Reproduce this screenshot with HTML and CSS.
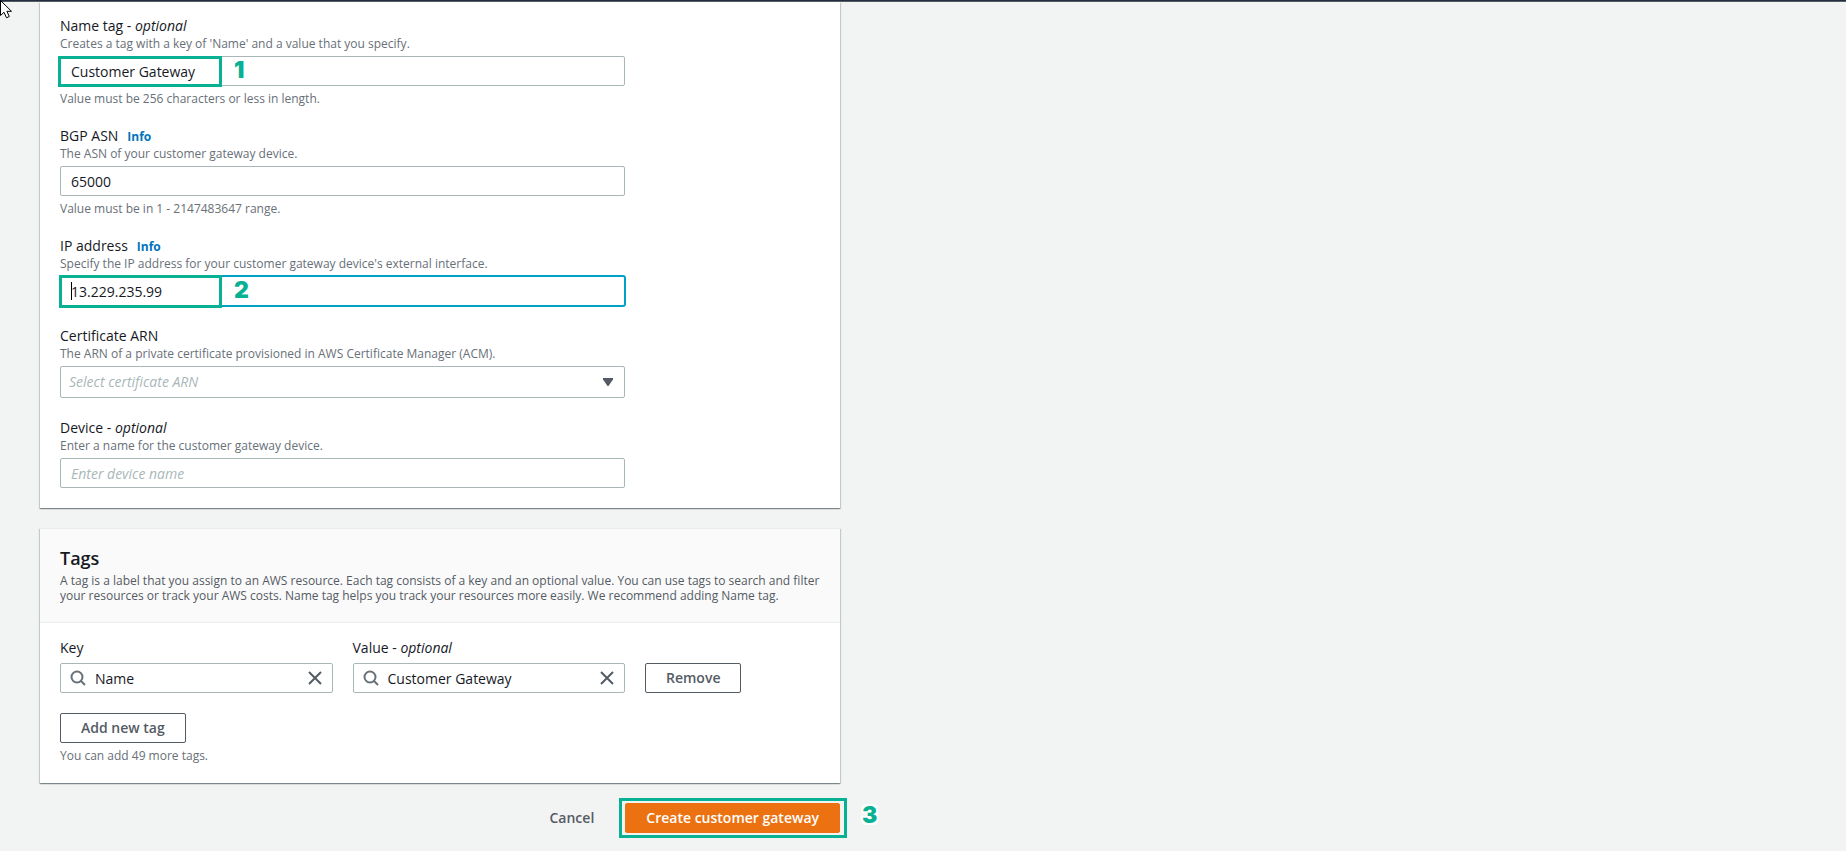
FILE: index.html
```html
<!DOCTYPE html>
<html lang="en">
<head>
  <meta charset="UTF-8">
  <meta name="viewport" content="width=device-width, initial-scale=1.0">
  <title>Create customer gateway</title>
  <link rel="stylesheet" href="styles.css">
</head>
<body>
  <div class="topbar"></div>
  <svg class="pointer" width="14" height="20" viewBox="0 0 14 20" aria-hidden="true">
    <path d="M0.500 0.500V15.500L4 12.300L6.500 17.800L9.300 16.500L6.900 11.300H11.500Z" fill="#fff" stroke="#000"/>
  </svg>

  <main class="page">
    <!-- Details -->
    <section class="card card-details">
      <div class="field">
        <label for="nameTag">Name tag - <i>optional</i></label>
        <p class="hint">Creates a tag with a key of 'Name' and a value that you specify.</p>
        <div class="control">
          <input type="text" id="nameTag" class="input" value="Customer Gateway">
          <span class="mark mark-name"></span>
          <span class="step step-field">1</span>
        </div>
        <p class="constraint">Value must be 256 characters or less in length.</p>
      </div>

      <div class="field">
        <div class="label-row">
          <label for="bgpAsn">BGP ASN</label>
          <a href="#" class="info">Info</a>
        </div>
        <p class="hint">The ASN of your customer gateway device.</p>
        <div class="control">
          <input type="text" id="bgpAsn" class="input" value="65000">
        </div>
        <p class="constraint">Value must be in 1 - 2147483647 range.</p>
      </div>

      <div class="field">
        <div class="label-row">
          <label for="ipAddress">IP address</label>
          <a href="#" class="info">Info</a>
        </div>
        <p class="hint">Specify the IP address for your customer gateway device's external interface.</p>
        <div class="control">
          <input type="text" id="ipAddress" class="input input-active" value="13.229.235.99">
          <span class="caret"></span>
          <span class="mark mark-ip"></span>
          <span class="step step-field">2</span>
        </div>
      </div>

      <div class="field">
        <label for="certArn">Certificate ARN</label>
        <p class="hint">The ARN of a private certificate provisioned in AWS Certificate Manager (ACM).</p>
        <div class="control">
          <select id="certArn" class="input select">
            <option>Select certificate ARN</option>
          </select>
          <svg class="select-arrow" width="10" height="8" viewBox="0 0 10 8" aria-hidden="true">
            <path d="M0 0H10V1.500L5.500 8H4.500L0 1.500Z" fill="#545b64"/>
          </svg>
        </div>
      </div>

      <div class="field">
        <label for="device">Device - <i>optional</i></label>
        <p class="hint">Enter a name for the customer gateway device.</p>
        <div class="control">
          <input type="text" id="device" class="input" placeholder="Enter device name">
        </div>
      </div>
    </section>

    <!-- Tags -->
    <section class="card">
      <header class="card-header">
        <h2>Tags</h2>
        <p>A tag is a label that you assign to an AWS resource. Each tag consists of a key and an optional value. You can use tags to search and filter your resources or track your AWS costs. Name tag helps you track your resources more easily. We recommend adding Name tag.</p>
      </header>
      <div class="card-body">
        <div class="tag-row">
          <div class="tag-fields">
            <div class="tag-field">
              <label for="tagKey">Key</label>
              <div class="control">
                <svg class="icon-search" width="16" height="16" viewBox="0 0 16 16" aria-hidden="true">
                  <circle cx="7" cy="7" r="5.500" fill="none" stroke="#687078" stroke-width="2"/>
                  <path d="M11 11L15 15" stroke="#687078" stroke-width="2"/>
                </svg>
                <input type="text" id="tagKey" class="input input-search" value="Name">
                <button type="button" class="clear" aria-label="Clear key">
                  <svg width="14" height="14" viewBox="0 0 14 14"><path d="M1 1L13 13M13 1L1 13" stroke="#545b64" stroke-width="2"/></svg>
                </button>
              </div>
            </div>
            <div class="tag-field">
              <label for="tagValue">Value - <i>optional</i></label>
              <div class="control">
                <svg class="icon-search" width="16" height="16" viewBox="0 0 16 16" aria-hidden="true">
                  <circle cx="7" cy="7" r="5.500" fill="none" stroke="#687078" stroke-width="2"/>
                  <path d="M11 11L15 15" stroke="#687078" stroke-width="2"/>
                </svg>
                <input type="text" id="tagValue" class="input input-search" value="Customer Gateway">
                <button type="button" class="clear" aria-label="Clear value">
                  <svg width="14" height="14" viewBox="0 0 14 14"><path d="M1 1L13 13M13 1L1 13" stroke="#545b64" stroke-width="2"/></svg>
                </button>
              </div>
            </div>
          </div>
          <button type="button" class="btn">Remove</button>
        </div>
        <button type="button" class="btn">Add new tag</button>
        <p class="constraint">You can add 49 more tags.</p>
      </div>
    </section>

    <div class="actions">
      <button type="button" class="btn btn-link">Cancel</button>
      <div class="submit">
        <button type="submit" class="btn btn-primary">Create customer gateway</button>
        <span class="mark mark-submit"></span>
        <span class="step step-submit">3</span>
      </div>
    </div>
  </main>
</body>
</html>
```
FILE: styles.css
```css
* {
  box-sizing: border-box;
}

body {
  margin: 0;
  background-color: #f2f3f3;
  color: #16191f;
  font-family: "Open Sans", "Noto Sans", sans-serif;
  font-size: 14px;
  line-height: 20px;
}

h2, p {
  margin: 0;
}

.topbar {
  height: 2px;
  background-color: #232f3e;
  border-bottom: 1px solid #545b64;
}

.pointer {
  position: absolute;
  top: 0;
  left: 0;
}

.page {
  max-width: 800px;
  margin: 0 40px;
}

/* Cards */
.card {
  margin-bottom: 20px;
  background-color: #fff;
  border-top: 1px solid #eaeded;
  box-shadow: 0 1px 1px 0 rgba(0, 28, 36, 0.3), 1px 1px 1px 0 rgba(0, 28, 36, 0.15), -1px 1px 1px 0 rgba(0, 28, 36, 0.15);
}

.card-details {
  display: flex;
  flex-direction: column;
  gap: 20px;
  padding: 14px 20px 20px;
  border-top: none;
}

.card-header {
  padding: 18px 20px 19px;
  background-color: #fafafa;
  border-bottom: 1px solid #eaeded;
}

.card-header h2 {
  margin-bottom: 4px;
  font-size: 18px;
  font-weight: 600;
  line-height: 22px;
}

.card-header p {
  color: #545b64;
  font-size: 12px;
  line-height: 15px;
}

.card-body {
  padding: 15px 20px 20px;
}

/* Fields */
.field {
  width: calc(75% - 5px);
}

.field label, .tag-field label {
  display: block;
}

.label-row {
  display: flex;
  align-items: baseline;
  gap: 9px;
  height: 20px;
}

.info {
  color: #0073bb;
  font-size: 12px;
  font-weight: bold;
  text-decoration: none;
}

.hint {
  margin-bottom: 4px;
  color: #687078;
  font-size: 12px;
  line-height: 16px;
}

.constraint {
  margin-top: 6px;
  color: #687078;
  font-size: 12px;
  line-height: 14px;
}

.control {
  position: relative;
}

.input {
  display: block;
  width: 100%;
  height: 30px;
  padding: 0 10px;
  background-color: #fff;
  border: 1px solid #aab7b8;
  border-radius: 2px;
  color: #16191f;
  font: inherit;
}

.input::placeholder {
  color: #aab7b8;
  font-style: italic;
}

.input-active {
  border-color: #00a1c9;
  box-shadow: 0 0 0 1px #00a1c9;
}

.select {
  height: 32px;
  padding: 0 8px;
  appearance: none;
  color: #aab7b8;
  font-style: italic;
}

.select-arrow {
  position: absolute;
  top: 12px;
  right: 12px;
}

.caret {
  position: absolute;
  top: 6px;
  left: 11px;
  width: 1px;
  height: 18px;
  background-color: #000;
}

/* Tag editor */
.tag-row {
  display: flex;
  align-items: flex-end;
  gap: 20px;
  margin-bottom: 20px;
}

.tag-fields {
  display: grid;
  grid-template-columns: 1fr 1fr;
  gap: 20px;
  width: calc(75% - 5px);
}

.tag-field label {
  margin-bottom: 5px;
}

.input-search {
  padding: 0 34px;
}

.icon-search {
  position: absolute;
  top: 7px;
  left: 10px;
}

.clear {
  position: absolute;
  top: 8px;
  right: 11px;
  display: flex;
  padding: 0;
  background: none;
  border: none;
  cursor: pointer;
}

/* Buttons */
.btn {
  display: block;
  height: 30px;
  padding: 0 20px;
  background-color: #fff;
  border: 1px solid #545b64;
  border-radius: 2px;
  color: #545b64;
  font: inherit;
  font-weight: 600;
  cursor: pointer;
}

.btn-link {
  background-color: transparent;
  border-color: transparent;
}

.btn-primary {
  background-color: #ec7211;
  border-color: #ec7211;
  color: #fff;
}

.actions {
  display: flex;
  justify-content: flex-end;
  gap: 10px;
  padding-bottom: 18px;
}

.submit {
  position: relative;
}

/* Highlighted steps */
.mark {
  position: absolute;
  border: 3px solid #08b094;
  pointer-events: none;
}

.mark-name {
  top: 0;
  left: -2px;
  width: 164px;
  height: 31px;
}

.mark-ip {
  top: -1px;
  left: -1px;
  width: 163px;
  height: 33px;
}

.mark-submit {
  inset: -5px -7px -5px -6px;
}

.step {
  position: absolute;
  color: #08b094;
  font-family: Inter, sans-serif;
  font-size: 23px;
  font-weight: 900;
  line-height: 30px;
  text-shadow: 2px 0 #fff, -2px 0 #fff, 0 2px #fff, 0 -2px #fff, 2px 2px #fff, -2px 2px #fff, 2px -2px #fff, -2px -2px #fff;
}

.step-field {
  top: -1px;
  left: 174px;
}

.step-submit {
  top: -3px;
  left: calc(100% + 22px);
}
```
